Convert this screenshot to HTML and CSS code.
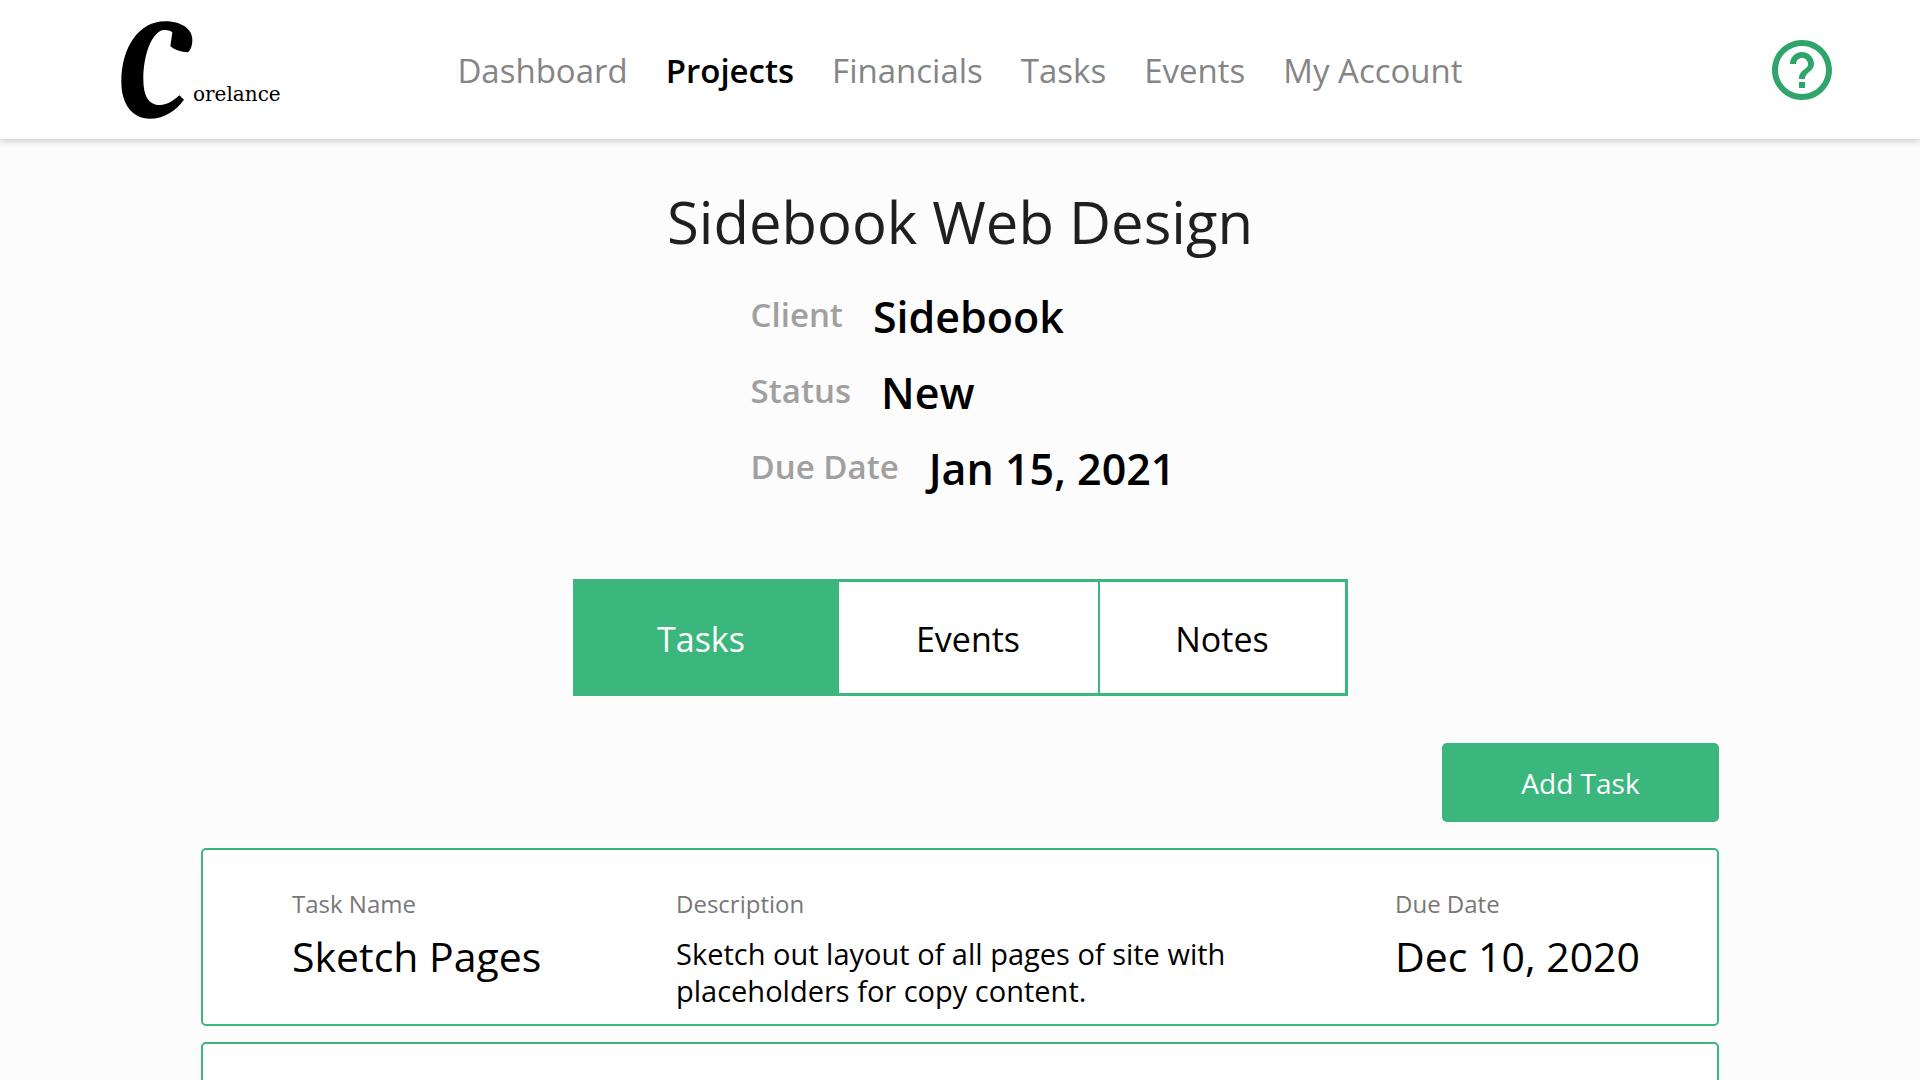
FILE: index.html
```html
<!DOCTYPE html>
<html lang="en">
<head>
<meta charset="utf-8">
<title>Corelance - Sidebook Web Design</title>
<link rel="stylesheet" href="styles.css">
</head>
<body>
<header class="topbar">
  <a class="logo" href="#" aria-label="Corelance">
    <svg class="logo-mark" viewBox="63 62 216 294" aria-hidden="true"><path d="M195 63C243 63 277 85 277 118C277 135 272 150 263 156C243 155 224 149 211 138L217 96C210 90 202 89 190 89C155 95 130 165 130 235C130 285 145 314 180 314C202 314 222 300 238 285L252 298C228 332 190 355 150 355C96 355 64 310 64 245C64 140 118 63 195 63Z"/></svg>
    <span class="logo-text">orelance</span>
  </a>
  <nav class="nav">
    <a href="#">Dashboard</a>
    <a class="active" href="#">Projects</a>
    <a href="#">Financials</a>
    <a href="#">Tasks</a>
    <a href="#">Events</a>
    <a href="#">My Account</a>
  </nav>
  <button class="help" type="button" aria-label="Help">
    <svg viewBox="2 2 20 20" aria-hidden="true"><path d="M11 18h2v-2h-2v2zm1-16C6.480 2 2 6.480 2 12s4.480 10 10 10 10-4.480 10-10S17.520 2 12 2zm0 18c-4.410 0-8-3.590-8-8s3.590-8 8-8 8 3.590 8 8-3.590 8-8 8zm0-14c-2.210 0-4 1.790-4 4h2c0-1.100.9-2 2-2s2 .9 2 2c0 2-3 1.750-3 5h2c0-2.250 3-2.500 3-5 0-2.210-1.790-4-4-4z"/></svg>
  </button>
</header>
<main class="page">
  <h1 class="title">Sidebook Web Design</h1>
  <dl class="details">
    <div class="detail"><dt>Client</dt><dd>Sidebook</dd></div>
    <div class="detail"><dt>Status</dt><dd>New</dd></div>
    <div class="detail"><dt>Due Date</dt><dd>Jan 15, 2021</dd></div>
  </dl>
  <div class="tabs" role="tablist">
    <button class="tab selected" type="button" role="tab" aria-selected="true">Tasks</button>
    <button class="tab" type="button" role="tab" aria-selected="false">Events</button>
    <button class="tab" type="button" role="tab" aria-selected="false">Notes</button>
  </div>
  <section class="tasks">
    <button class="add" type="button">Add Task</button>
    <article class="card">
      <div class="field"><span class="label">Task Name</span><span class="value">Sketch Pages</span></div>
      <div class="field"><span class="label">Description</span><p class="text">Sketch out layout of all pages of site with placeholders for copy content.</p></div>
      <div class="field"><span class="label">Due Date</span><span class="value">Dec 10, 2020</span></div>
    </article>
    <article class="card"></article>
  </section>
</main>
</body>
</html>
```
FILE: styles.css
```css
* { box-sizing: border-box; }

body {
  margin: 0;
  height: 100vh;
  overflow: hidden;
  background: #fcfcfc;
  color: #000;
  font-family: "Open Sans", "Noto Sans", sans-serif;
}

button {
  font: inherit;
  border: 0;
  padding: 0;
  cursor: pointer;
}

.topbar {
  display: grid;
  grid-template-columns: 1fr auto 1fr;
  align-items: center;
  height: 139px;
  padding: 0 88px;
  background: #fff;
  box-shadow: 0 3px 6px rgba(0, 0, 0, 0.16);
}

.logo {
  display: flex;
  align-items: flex-end;
  padding-left: 33px;
  color: #000;
  text-decoration: none;
}

.logo-mark { width: 72px; height: 98px; }

.logo-text {
  font: 20px/24px "DejaVu Serif", serif;
  padding-bottom: 13px;
}

.nav {
  display: flex;
  gap: 38px;
  padding-top: 2px;
}

.nav a {
  color: #858585;
  font-size: 33px;
  line-height: 48px;
  text-decoration: none;
}

.nav .active { color: #000; font-weight: 600; }

.help {
  justify-self: end;
  width: 60px;
  height: 60px;
  background: none;
}

.help svg { display: block; fill: #2fa56b; }

.page { padding-top: 43px; }

.title {
  margin: 0;
  color: #1f1f1f;
  font-size: 58px;
  font-weight: 400;
  line-height: 80px;
  text-align: center;
}

.details {
  width: fit-content;
  margin: 16px auto 0;
  padding-left: 6px;
}

.detail {
  display: flex;
  align-items: center;
  gap: 30px;
  height: 76px;
}

.detail dt {
  padding-bottom: 3px;
  color: #a0a0a0;
  font-size: 33px;
  font-weight: 600;
}

.detail dd { margin: 0; font-size: 43px; font-weight: 600; }

.tabs {
  display: grid;
  grid-template-columns: 263px 261px 1fr;
  width: 775px;
  height: 117px;
  margin: 73px auto 0;
  border: 3px solid #3bb77e;
}

.tab {
  padding-top: 3px;
  background: #fff;
  color: #000;
  font-size: 34px;
}

.tab + .tab { border-right: 2px solid #3bb77e; }
.tab:last-child { border-right: 0; }

.tab.selected {
  padding-right: 12px;
  background: #3bb77e;
  color: #fff;
}

.tasks {
  display: flex;
  flex-direction: column;
  gap: 16px;
  padding: 47px 201px 0;
}

.add {
  align-self: flex-end;
  width: 277px;
  height: 79px;
  margin-bottom: 10px;
  border-radius: 5px;
  background: #3bb77e;
  color: #fff;
  font-size: 28px;
}

.card {
  display: grid;
  grid-template-columns: 384px 1fr 242px;
  min-height: 178px;
  padding: 38px 80px 0 89px;
  border: 2px solid #3bb77e;
  border-radius: 5px;
  background: #fff;
}

.field { display: flex; flex-direction: column; }
.label { color: #777; font-size: 24px; line-height: 32px; }
.value { font-size: 41px; line-height: 72px; white-space: nowrap; }
.text { max-width: 580px; margin: 15px 0 0; font-size: 29px; line-height: 37px; }
```
